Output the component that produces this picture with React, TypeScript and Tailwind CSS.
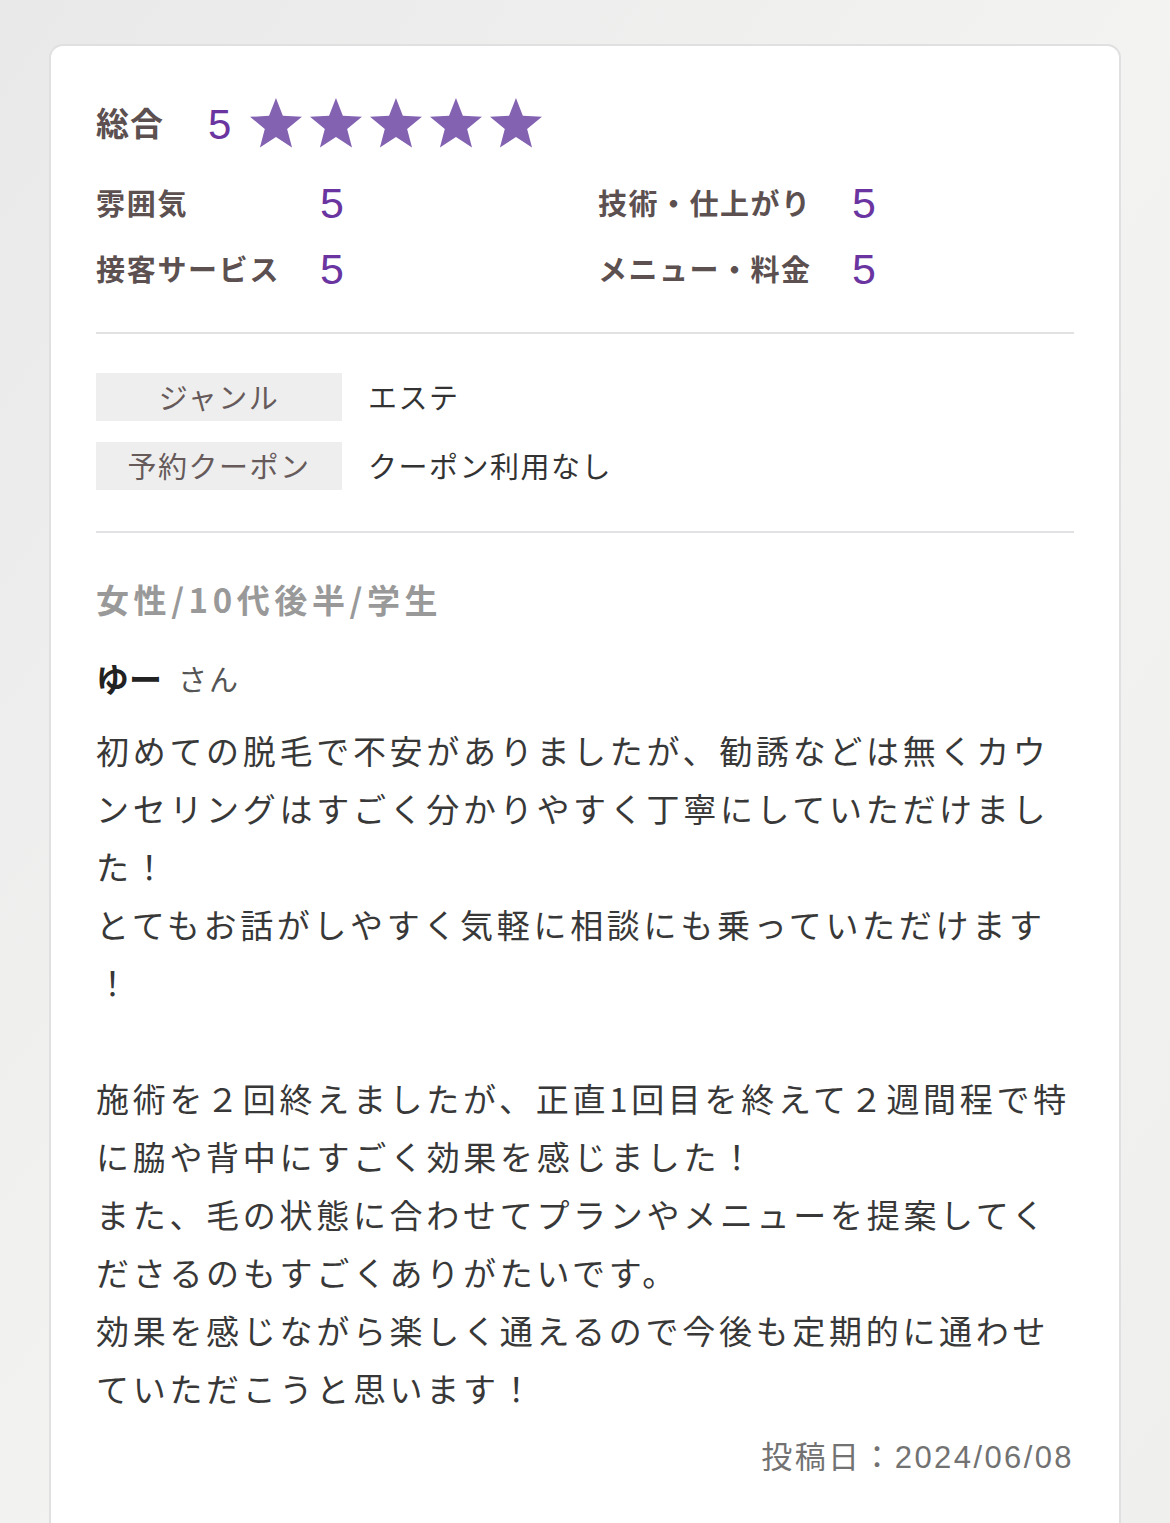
const JP = "font-['Noto_Sans_CJK_JP','Noto_Sans',sans-serif]";
const NUM = "font-['Liberation_Sans','Noto_Sans_CJK_JP',sans-serif]";

// five-point star, a little fatter than a regular one
function starPoints(R: number, ratio: number) {
  const pts: string[] = [];
  const w = 2 * R * Math.sin((72 * Math.PI) / 180);
  const cx = w / 2;
  for (let i = 0; i < 10; i++) {
    const rad = i % 2 === 0 ? R : R * ratio;
    const a = (i * 36 * Math.PI) / 180;
    pts.push(`${(cx + rad * Math.sin(a)).toFixed(2)},${(R - rad * Math.cos(a)).toFixed(2)}`);
  }
  return pts.join(" ");
}

const STAR = starPoints(27.3, 0.43);

function Star() {
  return (
    <svg width="52" height="50" viewBox="0 0 52 50" className="shrink-0">
      <polygon points={STAR} fill="#8462b2" />
    </svg>
  );
}

const subRatings = [
  ["雰囲気", "5", "技術・仕上がり", "5"],
  ["接客サービス", "5", "メニュー・料金", "5"],
];

const info = [
  ["ジャンル", "エステ"],
  ["予約クーポン", "クーポン利用なし"],
];

const bodyLines = [
  "初めての脱毛で不安がありましたが、勧誘などは無くカウ",
  "ンセリングはすごく分かりやすく丁寧にしていただけまし",
  "た！",
  "とてもお話がしやすく気軽に相談にも乗っていただけます",
  "！",
  "",
  "施術を２回終えましたが、正直1回目を終えて２週間程で特",
  "に脇や背中にすごく効果を感じました！",
  "また、毛の状態に合わせてプランやメニューを提案してく",
  "ださるのもすごくありがたいです。",
  "効果を感じながら楽しく通えるので今後も定期的に通わせ",
  "ていただこうと思います！",
];

export default function App() {
  return (
    <div className={`min-h-screen bg-gradient-to-br from-[#e9e9e9] via-[#f3f3f2] to-[#efefee] pt-[44px] pl-[49px] ${JP}`}>
      <div className="w-[1072px] h-[1600px] rounded-t-[14px] border-2 border-b-0 border-[#e0e0e0] bg-white px-[45px] pt-[52px]">
        {/* overall */}
        <div className="flex h-[50px] items-center">
          <span className="text-[33px] font-bold tracking-[1px] text-[#5c5050]">総合</span>
          <span className={`ml-[44px] ${NUM} mt-[4px] text-[42px] leading-none text-[#6a35a0]`}>5</span>
          <div className="ml-[19px] flex gap-[8px]">
            <Star />
            <Star />
            <Star />
            <Star />
            <Star />
          </div>
        </div>

        {/* sub ratings */}
        <div className="mt-[22px]">
          {subRatings.map((r, i) => (
            <div key={i} className="grid h-[66px] grid-cols-[224px_278px_254px_1fr] items-center">
              <span className="text-[29px] font-bold tracking-[1.7px] text-[#5c5050]">{r[0]}</span>
              <span className={`${NUM} text-[43px] leading-none text-[#6a35a0]`}>{r[1]}</span>
              <span className="text-[29px] font-bold tracking-[1.5px] text-[#5c5050]">{r[2]}</span>
              <span className={`${NUM} text-[43px] leading-none text-[#6a35a0]`}>{r[3]}</span>
            </div>
          ))}
        </div>

        <div className="mt-[30px] h-[2px] bg-[#e2e2e4]" />

        {/* info table */}
        <div className="mt-[39px] flex flex-col gap-[21px]">
          {info.map(([k, v]) => (
            <div key={k} className="flex h-[48px] items-center">
              <div className="flex h-full w-[246px] items-center justify-center bg-[#eeeeee] text-[29px] tracking-[1.5px] text-[#665a5a]">
                {k}
              </div>
              <div className="ml-[26px] text-[29px] tracking-[1.5px] text-[#333333]">{v}</div>
            </div>
          ))}
        </div>

        <div className="mt-[41px] h-[2px] bg-[#e2e2e4]" />

        {/* reviewer */}
        <div className="mt-[38px] flex h-[58px] items-center text-[33px] font-bold tracking-[4.6px] text-[#999999]">
          女性/10代後半/学生
        </div>
        <div className="mt-[21px] flex h-[58px] items-center">
          <span className="text-[33px] font-bold text-[#222222]">ゆー</span>
          <span className="ml-[16px] text-[29px] tracking-[2px] text-[#555555]">さん</span>
        </div>

        {/* body */}
        <div className="mt-[13px] text-[33px] tracking-[3.7px] text-[#383838]">
          {bodyLines.map((l, i) => (
            <div key={i} className="h-[58px] whitespace-nowrap leading-[58px]">
              {l}
            </div>
          ))}
        </div>

        <div className={`mt-[12px] flex h-[58px] items-center justify-end ${NUM} text-[31px] tracking-[2.4px] text-[#727272]`}>
          投稿日：2024/06/08
        </div>
      </div>
    </div>
  );
}
